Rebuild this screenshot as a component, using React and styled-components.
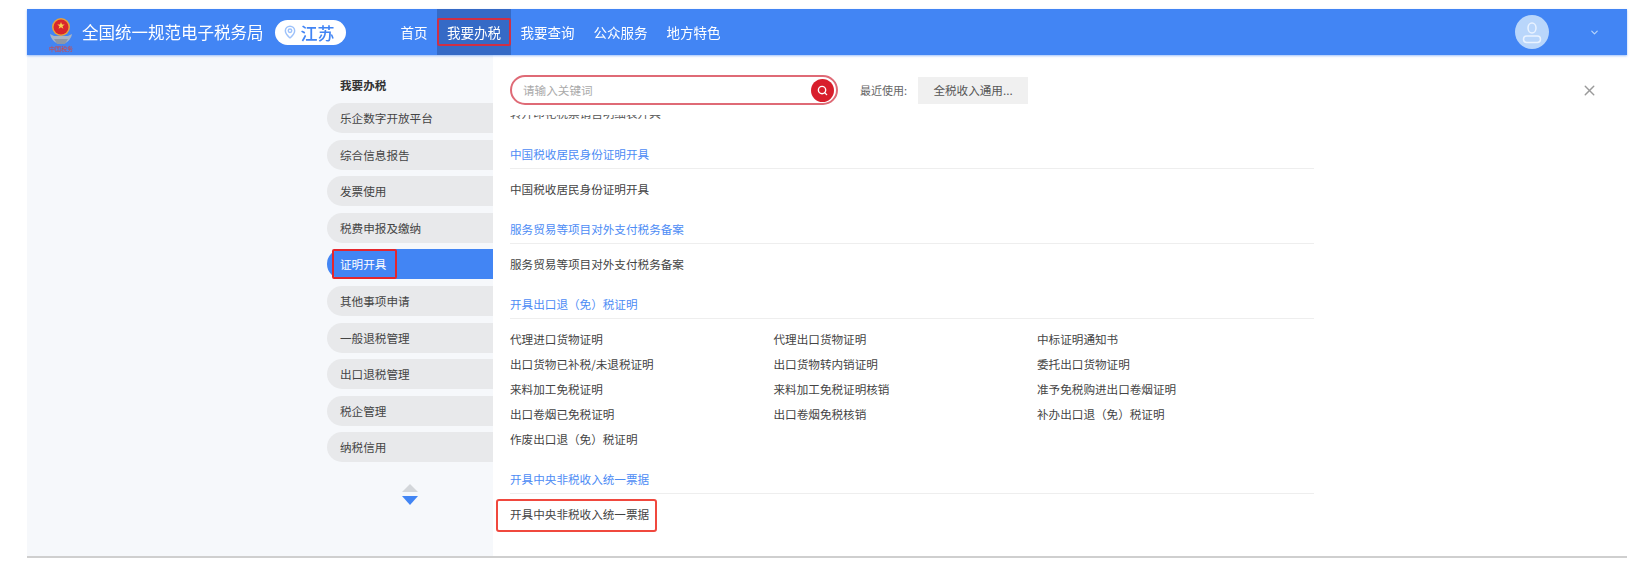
import React from "react";
import styled, { createGlobalStyle } from "styled-components";
import { MapPin, Search, X, ChevronDown } from "lucide-react";

const NAV = ["首页", "我要办税", "我要查询", "公众服务", "地方特色"];
const MENU = [
  "乐企数字开放平台",
  "综合信息报告",
  "发票使用",
  "税费申报及缴纳",
  "证明开具",
  "其他事项申请",
  "一般退税管理",
  "出口退税管理",
  "税企管理",
  "纳税信用",
];
const SECTIONS = [
  { title: "中国税收居民身份证明开具", items: ["中国税收居民身份证明开具"] },
  { title: "服务贸易等项目对外支付税务备案", items: ["服务贸易等项目对外支付税务备案"] },
  {
    title: "开具出口退（免）税证明",
    items: [
      "代理进口货物证明",
      "代理出口货物证明",
      "中标证明通知书",
      "出口货物已补税/未退税证明",
      "出口货物转内销证明",
      "委托出口货物证明",
      "来料加工免税证明",
      "来料加工免税证明核销",
      "准予免税购进出口卷烟证明",
      "出口卷烟已免税证明",
      "出口卷烟免税核销",
      "补办出口退（免）税证明",
      "作废出口退（免）税证明",
    ],
  },
  {
    title: "开具中央非税收入统一票据",
    items: ["开具中央非税收入统一票据"],
    marked: true,
  },
];

function Emblem() {
  return (
    <svg width="26" height="28" viewBox="0 0 26 28">
      <path d="M2 17c1 6 6 10 11 10s10-4 11-10l-4 2H6z" fill="#a9b4c4" />
      <path d="M6 22h14l-3 5H9z" fill="#8d97a6" />
      <circle cx="13" cy="10" r="9" fill="#e8a23a" />
      <circle cx="13" cy="10" r="7.5" fill="#d9262c" />
      <path d="M13 5l1 2.6h2.7l-2.2 1.6.9 2.6-2.4-1.6-2.4 1.6.9-2.6-2.2-1.6H12z" fill="#f6d04d" />
    </svg>
  );
}

function AvatarIcon() {
  return (
    <svg width="34" height="34" viewBox="0 0 34 34" fill="none" stroke="#eaf3ff" strokeWidth="1.5">
      <ellipse cx="17" cy="13" rx="4" ry="5" />
      <rect x="8.5" y="21" width="17" height="6.5" rx="3.2" />
    </svg>
  );
}

export default function App() {
  return (
    <Page>
      <GlobalStyle />
      <Header>
        <Brand>
          <LogoMark>
            <Emblem />
            <LogoText>中国税务</LogoText>
          </LogoMark>
          <BrandName>全国统一规范电子税务局</BrandName>
          <RegionPill>
            <MapPin size={14} color="#9ec2fa" strokeWidth={2.5} />
            江苏
          </RegionPill>
        </Brand>
        <Nav>
          {NAV.map((name) => (
            <NavItem key={name} $active={name === "我要办税"}>
              {name}
            </NavItem>
          ))}
        </Nav>
        <UserArea>
          <Avatar>
            <AvatarIcon />
          </Avatar>
          <ChevronDown size={11} color="#b9d6fb" strokeWidth={2.5} />
        </UserArea>
      </Header>

      <Body>
        <Sidebar>
          <SideTitle>我要办税</SideTitle>
          <SideList>
            {MENU.map((name) => (
              <SideItem key={name} $active={name === "证明开具"}>
                {name}
              </SideItem>
            ))}
          </SideList>
          <Arrows>
            <ArrowUp />
            <ArrowDown />
          </Arrows>
        </Sidebar>

        <Main>
          <SearchRow>
            <SearchBox>
              <SearchInput>请输入关键词</SearchInput>
              <SearchButton>
                <Search size={11} color="#fff" strokeWidth={3} />
              </SearchButton>
            </SearchBox>
            <RecentLabel>最近使用:</RecentLabel>
            <RecentChip>全税收入通用...</RecentChip>
            <CloseButton>
              <X size={17} color="#9a9a9a" />
            </CloseButton>
          </SearchRow>

          <Scroll>
            <ClippedRow>
              <span>转开印花税票销售明细表开具</span>
            </ClippedRow>
            {SECTIONS.map((section) => (
              <Section key={section.title}>
                <SectionTitle>{section.title}</SectionTitle>
                <ItemGrid>
                  {section.items.map((item) => (
                    <Item key={item} $marked={section.marked}>
                      {item}
                    </Item>
                  ))}
                </ItemGrid>
              </Section>
            ))}
          </Scroll>
        </Main>
      </Body>
    </Page>
  );
}

const GlobalStyle = createGlobalStyle`
  html, body {
    margin: 0;
    padding: 0;
    background: #fff;
    font-family: "Noto Sans CJK SC", "Liberation Sans", sans-serif;
  }
`;

const Page = styled.div`
  width: 1652px;
  height: 564px;
  box-sizing: border-box;
  padding: 9px 25px 0 27px;
  overflow: hidden;
  filter: blur(0.6px);
`;

const Header = styled.header`
  height: 46px;
  display: flex;
  align-items: stretch;
  background: #4285f4;
  box-shadow: 0 1px 2px rgba(66, 133, 244, 0.5);
  position: relative;
`;

const Brand = styled.div`
  display: flex;
  align-items: center;
  width: 364px;
  padding-left: 20px;
  box-sizing: border-box;
`;

const LogoMark = styled.div`
  display: flex;
  flex-direction: column;
  align-items: center;
  width: 28px;
  margin-top: 4px;
`;

const LogoText = styled.div`
  font-size: 6px;
  line-height: 7px;
  color: #d8453c;
  white-space: nowrap;
`;

const BrandName = styled.div`
  margin-left: 7px;
  font-size: 16.5px;
  color: #fff;
  white-space: nowrap;
`;

const RegionPill = styled.div`
  display: flex;
  align-items: center;
  gap: 4px;
  margin-left: 11px;
  width: 71px;
  height: 25px;
  box-sizing: border-box;
  padding-left: 8px;
  border-radius: 13px;
  background: #fff;
  color: #4285f4;
  font-size: 17px;
  font-weight: 500;
`;

const Nav = styled.nav`
  display: flex;
  align-items: stretch;
`;

const NavItem = styled.div`
  position: relative;
  display: flex;
  align-items: center;
  padding: 0 ${(p) => (p.$active ? "10px" : "9.5px")};
  font-size: 13.5px;
  color: #fff;
  white-space: nowrap;
  background: ${(p) => (p.$active ? "#356ac6" : "transparent")};

  ${(p) =>
    p.$active &&
    `&::after {
      content: "";
      position: absolute;
      left: 0;
      right: 0;
      top: 9px;
      bottom: 9px;
      border: 2px solid #cf2f45;
      border-radius: 2px;
    }`}
`;

const UserArea = styled.div`
  margin-left: auto;
  display: flex;
  align-items: center;
  gap: 40px;
  padding-right: 27px;
`;

const Avatar = styled.div`
  width: 34px;
  height: 34px;
  border-radius: 50%;
  background: #b9d6fb;
`;

const Body = styled.div`
  display: flex;
  height: 501px;
  background: #fff;
  border-bottom: 2px solid #cfcfcf;
`;

const Sidebar = styled.aside`
  width: 466px;
  flex: none;
  box-sizing: border-box;
  padding: 20px 0 0 300px;
  background: #f6f8fb;
`;

const SideTitle = styled.div`
  height: 20px;
  line-height: 20px;
  padding-left: 13px;
  font-size: 11.6px;
  font-weight: 700;
  color: #333;
`;

const SideList = styled.div`
  display: flex;
  flex-direction: column;
  gap: 6.6px;
  margin-top: 8px;
`;

const SideItem = styled.div`
  position: relative;
  height: 30px;
  line-height: 30px;
  padding-left: 13px;
  border-radius: 15px 0 0 15px;
  font-size: 11.6px;
  color: ${(p) => (p.$active ? "#fff" : "#444")};
  background: ${(p) => (p.$active ? "#4285f4" : "#e8e9eb")};

  ${(p) =>
    p.$active &&
    `&::after {
      content: "";
      position: absolute;
      left: 5px;
      top: 0;
      bottom: 0;
      width: 65px;
      border: 2px solid #e5262c;
      border-radius: 2px;
      box-sizing: border-box;
    }`}
`;

const Arrows = styled.div`
  display: flex;
  flex-direction: column;
  align-items: center;
  gap: 4px;
  margin-top: 22px;
`;

const ArrowUp = styled.div`
  width: 0;
  height: 0;
  border-left: 8px solid transparent;
  border-right: 8px solid transparent;
  border-bottom: 8px solid #d3d6da;
`;

const ArrowDown = styled.div`
  width: 0;
  height: 0;
  border-left: 8px solid transparent;
  border-right: 8px solid transparent;
  border-top: 9px solid #4285f4;
`;

const Main = styled.main`
  flex: 1;
  min-width: 0;
  padding: 20px 0 0 17px;
`;

const SearchRow = styled.div`
  display: flex;
  align-items: center;
  height: 30px;
`;

const SearchBox = styled.div`
  display: flex;
  align-items: center;
  justify-content: space-between;
  width: 328px;
  height: 30px;
  box-sizing: border-box;
  padding: 0 2px 0 11px;
  border: 2px solid #df6a76;
  border-radius: 15px;
`;

const SearchInput = styled.div`
  font-size: 11.6px;
  color: #aaa;
`;

const SearchButton = styled.div`
  width: 23px;
  height: 23px;
  display: flex;
  align-items: center;
  justify-content: center;
  border-radius: 50%;
  background: #d81e2c;
`;

const RecentLabel = styled.div`
  margin-left: 22px;
  width: 58px;
  font-size: 11px;
  color: #666;
  white-space: nowrap;
`;

const RecentChip = styled.div`
  width: 110px;
  height: 27px;
  line-height: 27px;
  text-align: center;
  background: #f0f0f0;
  font-size: 11.6px;
  color: #555;
`;

const CloseButton = styled.div`
  margin-left: auto;
  margin-right: 29px;
  display: flex;
`;

const Scroll = styled.div`
  width: 804px;
  margin-top: 10px;
`;

const ClippedRow = styled.div`
  height: 5px;
  overflow: hidden;
  font-size: 11.6px;
  line-height: 14px;
  color: #555;

  span {
    display: block;
    margin-top: -9px;
  }
`;

const Section = styled.section`
  &:first-of-type {
    margin-top: 20px;
  }
`;

const SectionTitle = styled.div`
  height: 28px;
  line-height: 28px;
  font-size: 11.6px;
  color: #4d8cf5;
  border-bottom: 1px solid #eeeeee;
`;

const ItemGrid = styled.div`
  display: grid;
  grid-template-columns: repeat(3, 263.5px);
  padding: 8px 0 13px;
`;

const Item = styled.div`
  position: relative;
  height: 25px;
  line-height: 25px;
  font-size: 11.6px;
  color: #444;
  white-space: nowrap;

  ${(p) =>
    p.$marked &&
    `&::after {
      content: "";
      position: absolute;
      left: -14px;
      top: -3px;
      width: 161px;
      height: 33px;
      box-sizing: border-box;
      border: 2px solid #f0483e;
      border-radius: 3px;
    }`}
`;
